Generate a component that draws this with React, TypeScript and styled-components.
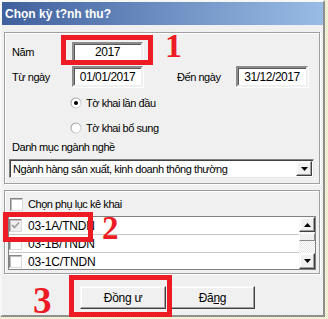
import React from "react";
import styled, { createGlobalStyle } from "styled-components";

const Global = createGlobalStyle`
  html, body { margin: 0; padding: 0; }
  body {
    width: 328px;
    height: 319px;
    overflow: hidden;
    font-family: "Liberation Sans", Arial, sans-serif;
    font-size: 11px;
    letter-spacing: -0.45px;
    color: #000;
  }
`;

const Desktop = styled.div`
  position: relative;
  width: 328px;
  height: 319px;
  background-color: #f3f0d4;
  background-image: repeating-conic-gradient(#fbf8e4 0 25%, #e2e8c4 0 50%);
  background-size: 2px 2px;
`;

const Window = styled.div`
  width: 325px;
  height: 317px;
  box-sizing: border-box;
  border: 2px solid;
  border-color: #f7f7f7 #8f8f8f #8f8f8f #f7f7f7;
  background: #f0f0f0;
  display: flex;
  flex-direction: column;
`;

const TitleBar = styled.div`
  height: 23px;
  flex: none;
  background: linear-gradient(to right, #40609d, #98bce5);
  color: #fff;
  font-weight: bold;
  font-size: 12px;
  letter-spacing: 0;
  display: flex;
  align-items: center;
  padding-left: 3px;
`;

const Body = styled.div`
  padding: 7px 3px 0 2px;
  display: flex;
  flex-direction: column;
`;

const GroupBox = styled.div<{ $h: number; $gap?: number }>`
  box-sizing: border-box;
  height: ${(p) => p.$h}px;
  margin-top: ${(p) => p.$gap ?? 0}px;
  border: 1px solid #a0a0a0;
  box-shadow: inset 1px 1px 0 #fff, 1px 1px 0 #fff;
  display: flex;
  flex-direction: column;
  padding-left: 4px;
`;

const FieldRow = styled.div<{ $top: number; $h: number }>`
  display: flex;
  align-items: center;
  margin-top: ${(p) => p.$top}px;
  height: ${(p) => p.$h}px;
  padding-left: 3px;
`;

const Label = styled.span<{ $w?: number; $ml?: number }>`
  width: ${(p) => (p.$w ? `${p.$w}px` : "auto")};
  margin-left: ${(p) => p.$ml ?? 0}px;
  flex: none;
  white-space: nowrap;
`;

const TextBox = styled.div<{ $w: number }>`
  box-sizing: border-box;
  width: ${(p) => p.$w}px;
  height: 100%;
  background: #fff;
  border: 2px solid;
  border-color: #8c8c8c #f0f0f0 #f0f0f0 #8c8c8c;
  box-shadow: inset 1px 1px 0 #5a5a5a, 1px 1px 0 #fff;
  display: flex;
  align-items: center;
  justify-content: center;
  flex: none;
  font-size: 12px;
`;

const RadioRow = styled.label<{ $top: number }>`
  display: flex;
  align-items: center;
  gap: 4px;
  height: 18px;
  margin-top: ${(p) => p.$top}px;
  padding-left: 61px;
`;

const ComboBox = styled.div`
  box-sizing: border-box;
  width: 305px;
  height: 19px;
  margin-top: 5px;
  background: #fff;
  border: 1px solid;
  border-color: #7f7f7f #e8e8e8 #e8e8e8 #7f7f7f;
  box-shadow: inset 1px 1px 0 #404040;
  display: flex;
  align-items: center;
  padding: 1px 1px 1px 3px;
`;

const ComboText = styled.span`
  flex: 1;
  white-space: nowrap;
  overflow: hidden;
`;

const RaisedButton = styled.div<{ $w: number; $h: number }>`
  box-sizing: border-box;
  width: ${(p) => p.$w}px;
  height: ${(p) => p.$h}px;
  flex: none;
  background: #f0f0f0;
  border: 1px solid;
  border-color: #f8f8f8 #404040 #404040 #f8f8f8;
  box-shadow: inset -1px -1px 0 #a0a0a0, inset 1px 1px 0 #fff;
  display: flex;
  align-items: center;
  justify-content: center;
`;

const CheckRow = styled.label`
  display: flex;
  align-items: center;
  gap: 5px;
  height: 14px;
  margin-top: 6px;
  padding-left: 1px;
`;

const Box = styled.span<{ $disabled?: boolean }>`
  box-sizing: border-box;
  width: 13px;
  height: 13px;
  flex: none;
  background: ${(p) => (p.$disabled ? "#f0f0f0" : "#fff")};
  border: 1px solid;
  border-color: #858585 #dadada #dadada #858585;
  box-shadow: inset 1px 1px 0 #bdbdbd;
  display: flex;
  align-items: center;
  justify-content: center;
`;

const ListBox = styled.div`
  box-sizing: border-box;
  width: 308px;
  height: 54px;
  margin-top: 5px;
  margin-left: -1px;
  background: #fff;
  border: 1px solid #828282;
  display: flex;
  overflow: hidden;
`;

const ListItems = styled.div`
  flex: 1;
  display: flex;
  flex-direction: column;
`;

const ListItem = styled.div`
  box-sizing: border-box;
  height: 18px;
  flex: none;
  border-bottom: 1px solid #c8c8c8;
  display: flex;
  align-items: center;
  gap: 6px;
  font-size: 12px;
  letter-spacing: -0.2px;
`;

const ScrollBar = styled.div`
  width: 16px;
  flex: none;
  display: flex;
  flex-direction: column;
  background-color: #f4f4f4;
  background-image: repeating-conic-gradient(#ffffff 0 25%, #e6e6e6 0 50%);
  background-size: 2px 2px;
`;

const Thumb = styled.div`
  box-sizing: border-box;
  height: 8px;
  margin-top: 1px;
  background: #f0f0f0;
  border: 1px solid;
  border-color: #fff #8a8a8a #8a8a8a #fff;
`;

const Spacer = styled.div`
  flex: 1;
`;

const ButtonRow = styled.div`
  display: flex;
  gap: 4px;
  margin-top: 12px;
  padding-left: 76px;
  font-size: 12px;
  letter-spacing: -0.3px;
`;

const Accel = styled.span`
  text-decoration: underline;
`;

const RedFrame = styled.div<{ $x: number; $y: number; $w: number; $h: number; $t: number }>`
  position: absolute;
  left: ${(p) => p.$x}px;
  top: ${(p) => p.$y}px;
  width: ${(p) => p.$w}px;
  height: ${(p) => p.$h}px;
  box-sizing: border-box;
  border: ${(p) => p.$t}px solid #ed1c24;
  pointer-events: none;
`;

const RedNumber = styled.span<{ $x: number; $y: number; $s: number }>`
  position: absolute;
  left: ${(p) => p.$x}px;
  top: ${(p) => p.$y}px;
  font-family: "Liberation Serif", "Times New Roman", serif;
  font-weight: bold;
  font-size: ${(p) => p.$s}px;
  letter-spacing: 0;
  line-height: 0.9;
  color: #ed1c24;
`;

const Radio = ({ checked }: { checked?: boolean }) => (
  <svg width="12" height="12" viewBox="0 0 12 12">
    <defs>
      <linearGradient id="rg" x1="0" y1="0" x2="1" y2="1">
        <stop offset="0" stopColor="#8a8a8a" />
        <stop offset="1" stopColor="#e6e6e6" />
      </linearGradient>
    </defs>
    <circle cx="6" cy="6" r="5.5" fill="url(#rg)" />
    <circle cx="6" cy="6" r="4.5" fill="#fff" />
    {checked && <circle cx="6" cy="6" r="2" fill="#000" />}
  </svg>
);

const Tick = () => (
  <svg width="9" height="9" viewBox="0 0 9 9">
    <polyline points="1,4 3.5,6.5 8,1.5" fill="none" stroke="#a0a0a0" strokeWidth="1.8" />
  </svg>
);

const Arrow = ({ up }: { up?: boolean }) => (
  <svg width="7" height="4" viewBox="0 0 7 4">
    <polygon points={up ? "3.5,0 7,4 0,4" : "0,0 7,0 3.5,4"} fill="#000" />
  </svg>
);

const items = ["03-1A/TNDN", "03-1B/TNDN", "03-1C/TNDN"];

export default function App() {
  return (
    <>
      <Global />
      <Desktop>
        <Window>
          <TitleBar>Chọn kỳ t?nh thu?</TitleBar>
          <Body>
            <GroupBox $h={152}>
              <FieldRow $top={9} $h={20}>
                <Label $w={60}>Năm</Label>
                <TextBox $w={71}>2017</TextBox>
              </FieldRow>
              <FieldRow $top={4} $h={21}>
                <Label $w={60}>Từ ngày</Label>
                <TextBox $w={71}>01/01/2017</TextBox>
                <Label $w={59} $ml={34}>Đến ngày</Label>
                <TextBox $w={72}>31/12/2017</TextBox>
              </FieldRow>
              <RadioRow $top={7}>
                <Radio checked />
                <span>Tờ khai lần đầu</span>
              </RadioRow>
              <RadioRow $top={7}>
                <Radio />
                <span>Tờ khai bổ sung</span>
              </RadioRow>
              <FieldRow $top={3} $h={14}>
                <Label>Danh mục ngành nghề</Label>
              </FieldRow>
              <ComboBox>
                <ComboText>Ngành hàng sản xuất, kinh doanh thông thường</ComboText>
                <RaisedButton $w={16} $h={15}>
                  <Arrow />
                </RaisedButton>
              </ComboBox>
            </GroupBox>
            <GroupBox $h={84} $gap={6}>
              <CheckRow>
                <Box />
                <span>Chọn phụ lục kê khai</span>
              </CheckRow>
              <ListBox>
                <ListItems>
                  {items.map((it, i) => (
                    <ListItem key={it}>
                      <Box $disabled={i === 0}>{i === 0 && <Tick />}</Box>
                      <span>{it}</span>
                    </ListItem>
                  ))}
                </ListItems>
                <ScrollBar>
                  <RaisedButton $w={16} $h={15}>
                    <Arrow up />
                  </RaisedButton>
                  <Thumb />
                  <Spacer />
                  <RaisedButton $w={16} $h={16}>
                    <Arrow />
                  </RaisedButton>
                </ScrollBar>
              </ListBox>
            </GroupBox>
            <ButtonRow>
              <RaisedButton $w={86} $h={23}>Đồng ư</RaisedButton>
              <RaisedButton $w={85} $h={23}>
                Đă<Accel>ng</Accel>
              </RaisedButton>
            </ButtonRow>
          </Body>
        </Window>
        <RedFrame $x={61} $y={35} $w={92} $h={30} $t={5} />
        <RedFrame $x={3} $y={212} $w={90} $h={30} $t={5} />
        <RedFrame $x={69} $y={275} $w={103} $h={42} $t={5} />
        <RedNumber $x={165} $y={31} $s={34}>1</RedNumber>
        <RedNumber $x={102} $y={214} $s={33}>2</RedNumber>
        <RedNumber $x={33} $y={284} $s={37}>3</RedNumber>
      </Desktop>
    </>
  );
}
